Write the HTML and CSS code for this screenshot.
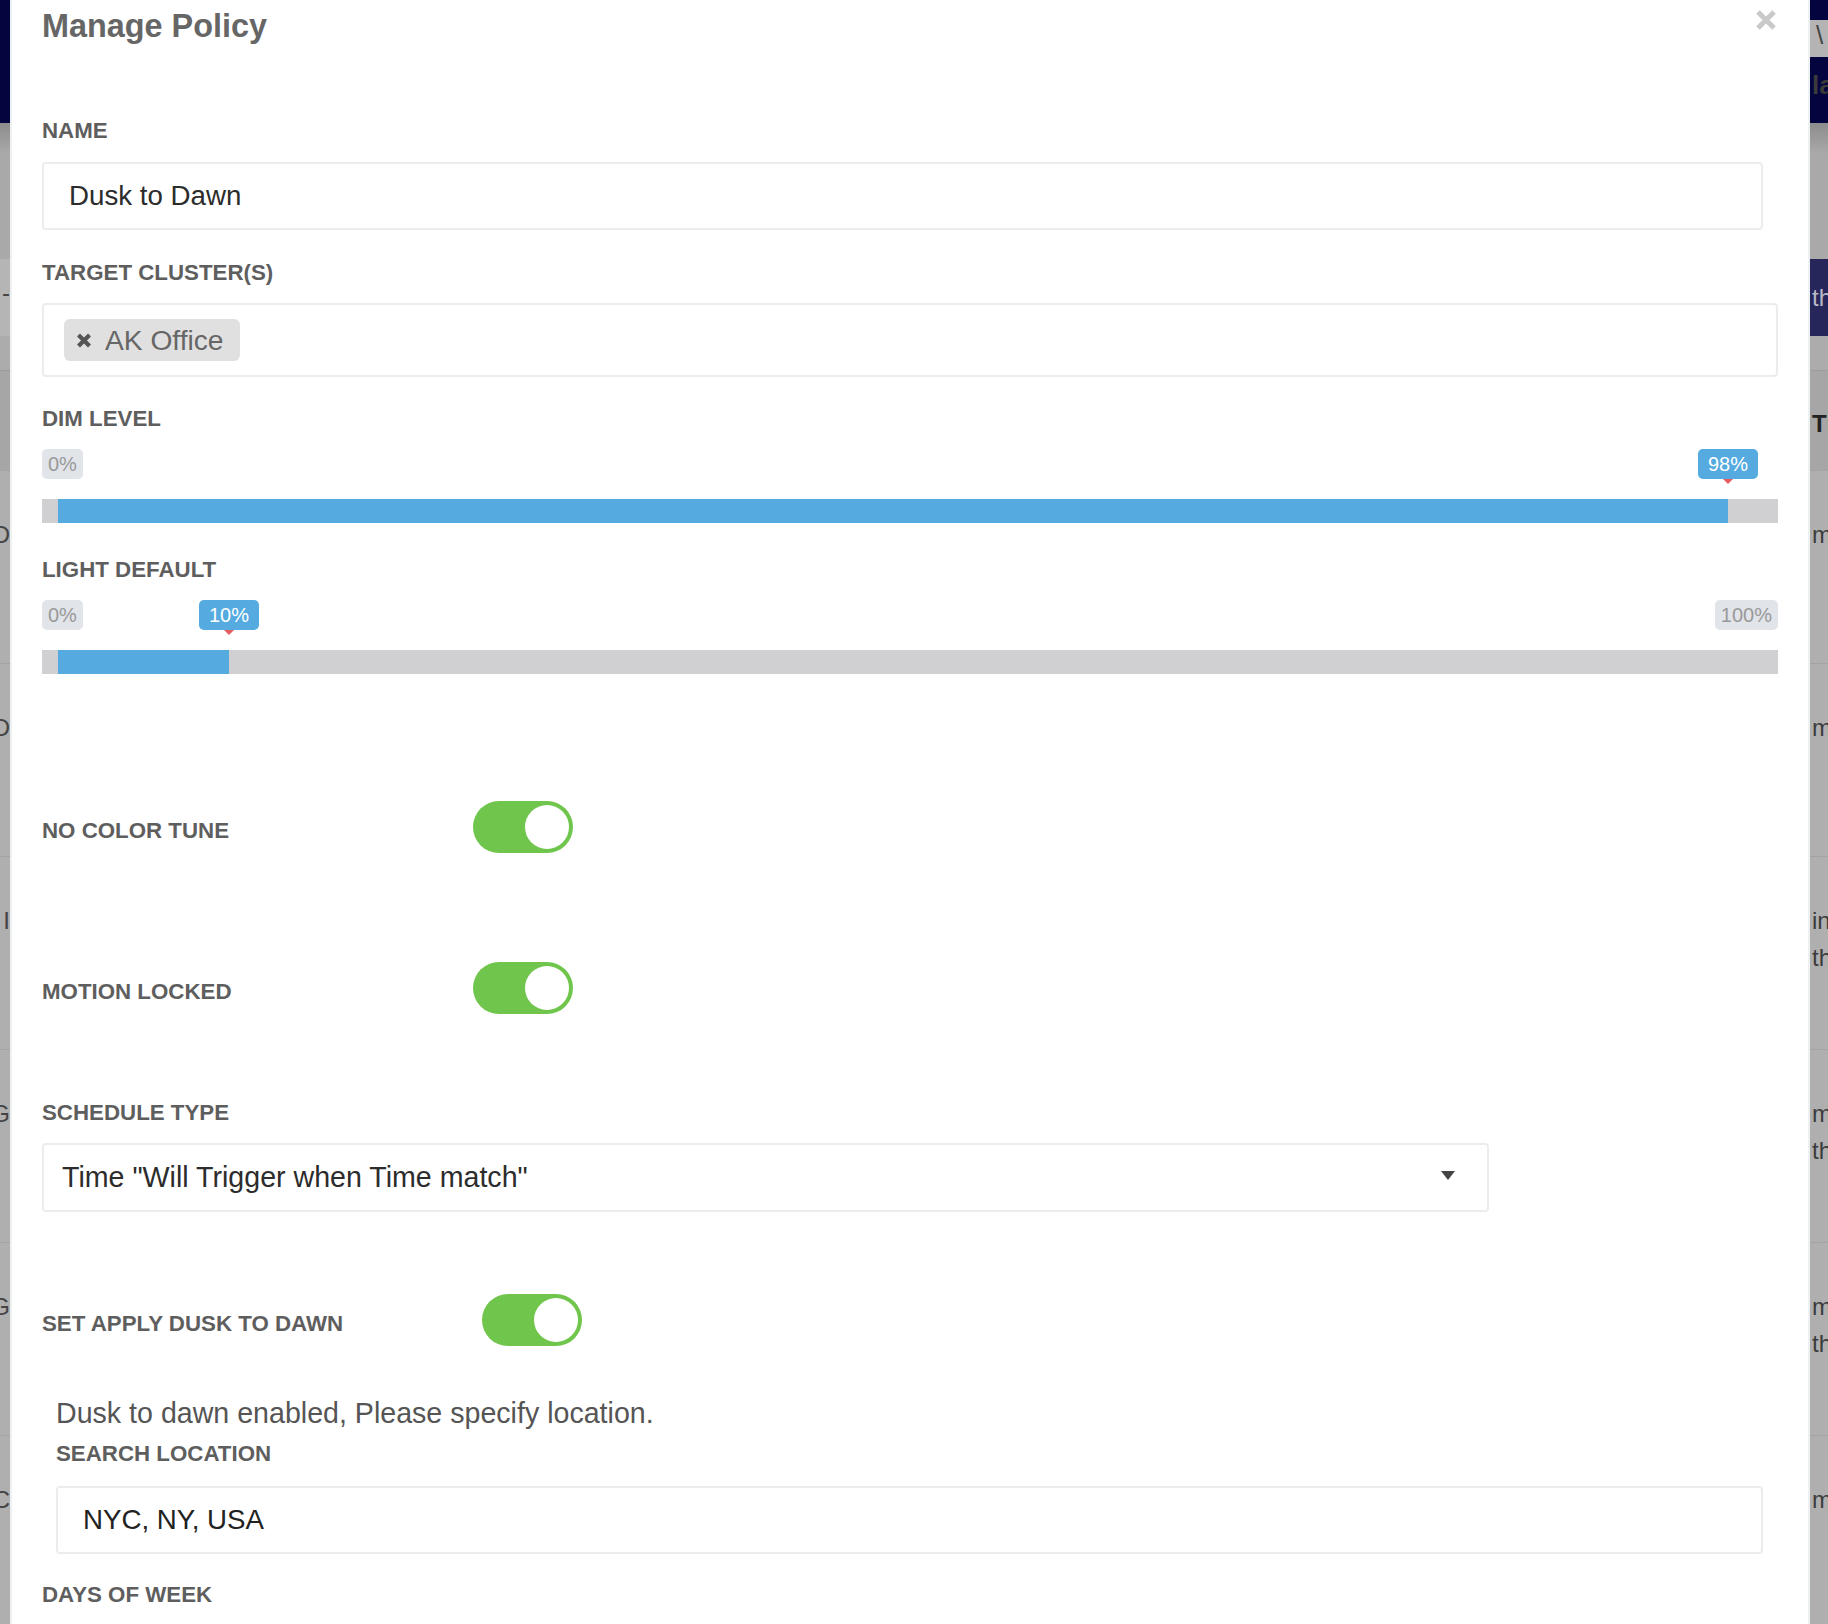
FILE: index.html
```html
<!DOCTYPE html>
<html>
<head>
<meta charset="utf-8">
<title>Manage Policy</title>
<link rel="stylesheet" href="styles.css">
</head>
<body>
<div class="page">
  <div class="bg-row h20"><div class="bl navy"></div><div class="br navy"></div></div>
  <div class="bg-row h37"><div class="bl navy"></div><div class="br lightbar"><span class="chev">\</span></div></div>
  <div class="bg-row h66"><div class="bl navy"></div><div class="br navy"><span class="navtxt">la</span></div></div>
  <div class="bg-row h136 shade"><div class="bl"></div><div class="br"></div></div>
  <div class="bg-row h77"><div class="bl lband"><span class="dash">-</span></div><div class="br purple"><span class="ptxt">th</span></div></div>
  <div class="bg-row h34"><div class="bl"></div><div class="br"></div></div>
  <div class="bg-row h100 thead"><div class="bl"></div><div class="br"><span class="bold">TE</span></div></div>
  <div class="bg-row trow"><div class="bl"><span>D</span></div><div class="br"><span>m</span></div></div>
  <div class="bg-row trow"><div class="bl"><span>D</span></div><div class="br"><span>m</span></div></div>
  <div class="bg-row trow"><div class="bl"><span>I</span></div><div class="br"><span>in<br>th</span></div></div>
  <div class="bg-row trow"><div class="bl"><span>G</span></div><div class="br"><span>m<br>th</span></div></div>
  <div class="bg-row trow"><div class="bl"><span>G</span></div><div class="br"><span>m<br>th</span></div></div>
  <div class="bg-row trow"><div class="bl"><span>C</span></div><div class="br"><span>m</span></div></div>
</div>

<div class="modal">
  <div class="modal-head">
    <h2 class="title">Manage Policy</h2>
    <button class="close" aria-label="Close">
      <svg width="20" height="20" viewBox="0 0 20 20"><path d="M2 2 L18 18 M18 2 L2 18" stroke="#c9c9c9" stroke-width="5" fill="none"/></svg>
    </button>
  </div>

  <label class="lbl lbl-name">NAME</label>
  <div class="field field-name">Dusk to Dawn</div>

  <label class="lbl lbl-target">TARGET CLUSTER(S)</label>
  <div class="tagbox">
    <span class="tag">
      <svg class="tag-x" width="16" height="15" viewBox="0 0 16 15"><path d="M2.5 2 L13.5 13 M13.5 2 L2.5 13" stroke="#555" stroke-width="4.2" fill="none"/></svg>
      <span>AK Office</span>
    </span>
  </div>

  <label class="lbl lbl-dim">DIM LEVEL</label>
  <div class="irs">
    <span class="irs-min">0%</span>
    <span class="irs-single" style="left:1686px">98%</span>
    <div class="irs-line"><div class="irs-bar" style="width:1670px"></div></div>
  </div>

  <label class="lbl lbl-light">LIGHT DEFAULT</label>
  <div class="irs">
    <span class="irs-min">0%</span>
    <span class="irs-max">100%</span>
    <span class="irs-single" style="left:187px">10%</span>
    <div class="irs-line"><div class="irs-bar" style="width:171px"></div></div>
  </div>

  <div class="toggle-row row-color">
    <span class="lbl tlbl">NO COLOR TUNE</span>
    <span class="toggle"><span class="knob"></span></span>
  </div>

  <div class="toggle-row row-motion">
    <span class="lbl tlbl">MOTION LOCKED</span>
    <span class="toggle"><span class="knob"></span></span>
  </div>

  <label class="lbl lbl-schedule">SCHEDULE TYPE</label>
  <div class="select">
    <span>Time "Will Trigger when Time match"</span>
    <svg class="caret" width="14" height="9" viewBox="0 0 14 9"><path d="M0 0 H14 L7 9 Z" fill="#444"/></svg>
  </div>

  <div class="toggle-row row-dusk">
    <span class="lbl tlbl tlbl-wide">SET APPLY DUSK TO DAWN</span>
    <span class="toggle"><span class="knob"></span></span>
  </div>

  <div class="dusk">
    <p class="help">Dusk to dawn enabled, Please specify location.</p>
    <label class="lbl lbl-search">SEARCH LOCATION</label>
    <div class="field field-search">NYC, NY, USA</div>
  </div>

  <label class="lbl lbl-days">DAYS OF WEEK</label>
</div>
</body>
</html>
```

FILE: styles.css
```css
* { box-sizing: border-box; margin: 0; padding: 0; }
html, body { width: 1828px; height: 1624px; overflow: hidden; }
body {
  font-family: "Liberation Sans", Arial, Helvetica, sans-serif;
  background: #adadad;
  position: relative;
}

/* ---------- backdrop page (visible only at the edges) ---------- */
.page { width: 1828px; display: flex; flex-direction: column; }
.bg-row { display: flex; justify-content: space-between; flex: none; background: #acacac; }
.bl { width: 10px; overflow: hidden; display: flex; justify-content: flex-end; white-space: nowrap; color: #444; font-size: 24px; }
.br { width: 18px; overflow: hidden; white-space: nowrap; padding-left: 2px; color: #3c3c3c; font-size: 24px; }
.h20 { height: 20px; }
.h37 { height: 37px; }
.h66 { height: 66px; }
.h136 { height: 136px; }
.h77 { height: 77px; }
.h34 { height: 34px; }
.h100 { height: 100px; }
.navy { background: #04043f; }
.lightbar { background: #b4b4b4; }
.chev { display: block; font-size: 26px; line-height: 30px; color: #444; padding-left: 4px; }
.navtxt { display: block; font-size: 26px; line-height: 56px; color: #3a3a3a; font-weight: 700; }
.shade .bl, .shade .br { background: linear-gradient(#8c8c8c, #a9a9a9 30px, #a9a9a9); }
.lband { background: #b5b5b5; }
.dash { display: block; line-height: 40px; padding-top: 14px; }
.purple { background: #26265a; }
.ptxt { display: block; font-size: 24px; line-height: 77px; color: #b9b9c6; }
.thead { border-top: 1px solid #9d9d9d; background: #a6a6a6; }
.thead .br { padding-top: 34px; line-height: 37px; }
.bold { font-weight: 700; color: #222; }
.trow { height: 193px; background: #afafaf; border-top: 1px solid #a3a3a3; }
.trow .bl, .trow .br { padding-top: 45px; line-height: 37px; align-items: flex-start; }

/* ---------- modal ---------- */
.modal {
  position: absolute;
  left: 10px;
  top: 0;
  width: 1800px;
  height: 1624px;
  background: #fff;
  border-left: 2px solid #edf1f1;
  border-right: 2px solid #edf1f1;
  padding: 8px 30px 0 30px;
  display: flex;
  flex-direction: column;
  align-items: flex-start;
}
.modal > * { flex: none; }

.modal-head { width: 100%; display: flex; justify-content: space-between; align-items: flex-start; }
.title { font-size: 32.4px; line-height: 36px; font-weight: 700; color: #666; }
.close { margin-top: 2px; margin-right: 2px; width: 20px; height: 20px; border: 0; background: none; display: block; }
.close svg { display: block; }

.lbl { display: block; font-size: 22.3px; line-height: 26px; font-weight: 700; color: #5e5e5e; white-space: nowrap; }
.lbl-name { margin-top: 74px; }
.lbl-target { margin-top: 30px; }
.lbl-dim { margin-top: 29px; }
.lbl-light { margin-top: 34px; }
.lbl-schedule { margin-top: 86px; }
.lbl-search { margin-top: 12px; }
.lbl-days { margin-top: 28px; }

.field {
  height: 68px;
  border: 2px solid #ececec;
  border-radius: 4px;
  display: flex;
  align-items: center;
  padding-left: 25px;
  font-size: 27.7px;
  color: #2c2c2c;
  background: #fff;
}
.field-name { width: 1721px; margin-top: 18px; }
.field-search { width: 1707px; margin-top: 19px; color: #222; }

.tagbox {
  width: 100%;
  height: 74px;
  margin-top: 17px;
  border: 2px solid #ececec;
  border-radius: 4px;
  display: flex;
  align-items: center;
  padding: 0 0 0 20px;
}
.tag {
  height: 42px;
  background: #e0e0e0;
  border-radius: 6px;
  display: flex;
  align-items: center;
  gap: 13px;
  padding: 0 16px 0 12px;
  font-size: 28.2px;
  color: #666;
}
.tag-x { display: block; }

/* range slider */
.irs { position: relative; width: 100%; margin-top: 17px; padding-top: 50px; font-size: 20px; }
.irs-min, .irs-max, .irs-single {
  position: absolute;
  top: 0;
  height: 30px;
  line-height: 30px;
  border-radius: 5px;
  white-space: nowrap;
}
.irs-min, .irs-max { padding: 0 6px; background: #e1e4e9; color: #999; }
.irs-min { left: 0; }
.irs-max { right: 0; }
.irs-single { padding: 0 10px; background: #55abdf; color: #fff; transform: translateX(-50%); }
.irs-single::after {
  content: "";
  position: absolute;
  left: 50%;
  top: 100%;
  margin-left: -5px;
  border-left: 5px solid transparent;
  border-right: 5px solid transparent;
  border-top: 5px solid #e35d61;
}
.irs-line { height: 24px; background: #d0cfd1; }
.irs-bar { height: 24px; margin-left: 16px; background: #55abdf; }

/* toggles */
.toggle-row { display: flex; align-items: center; }
.row-color { margin-top: 127px; }
.row-motion { margin-top: 109px; }
.row-dusk { margin-top: 82px; }
.tlbl { width: 431px; margin-top: 8px; flex: none; }
.tlbl-wide { width: 440px; }
.toggle {
  width: 100px;
  height: 52px;
  border-radius: 26px;
  background: #70c54c;
  display: flex;
  justify-content: flex-end;
  align-items: center;
  padding: 4px;
  flex: none;
}
.knob { width: 44px; height: 44px; border-radius: 50%; background: #fff; display: block; }

/* select */
.select {
  width: 1447px;
  height: 69px;
  margin-top: 17px;
  border: 2px solid #ececec;
  border-radius: 4px;
  display: flex;
  align-items: center;
  justify-content: space-between;
  padding: 0 32px 0 18px;
  font-size: 28.6px;
  color: #2c2c2c;
}
.caret { display: block; margin-bottom: 4px; }

/* dusk section */
.dusk { padding-left: 14px; width: 100%; }
.help { margin-top: 51px; font-size: 28.6px; line-height: 32px; color: #555; }
```
